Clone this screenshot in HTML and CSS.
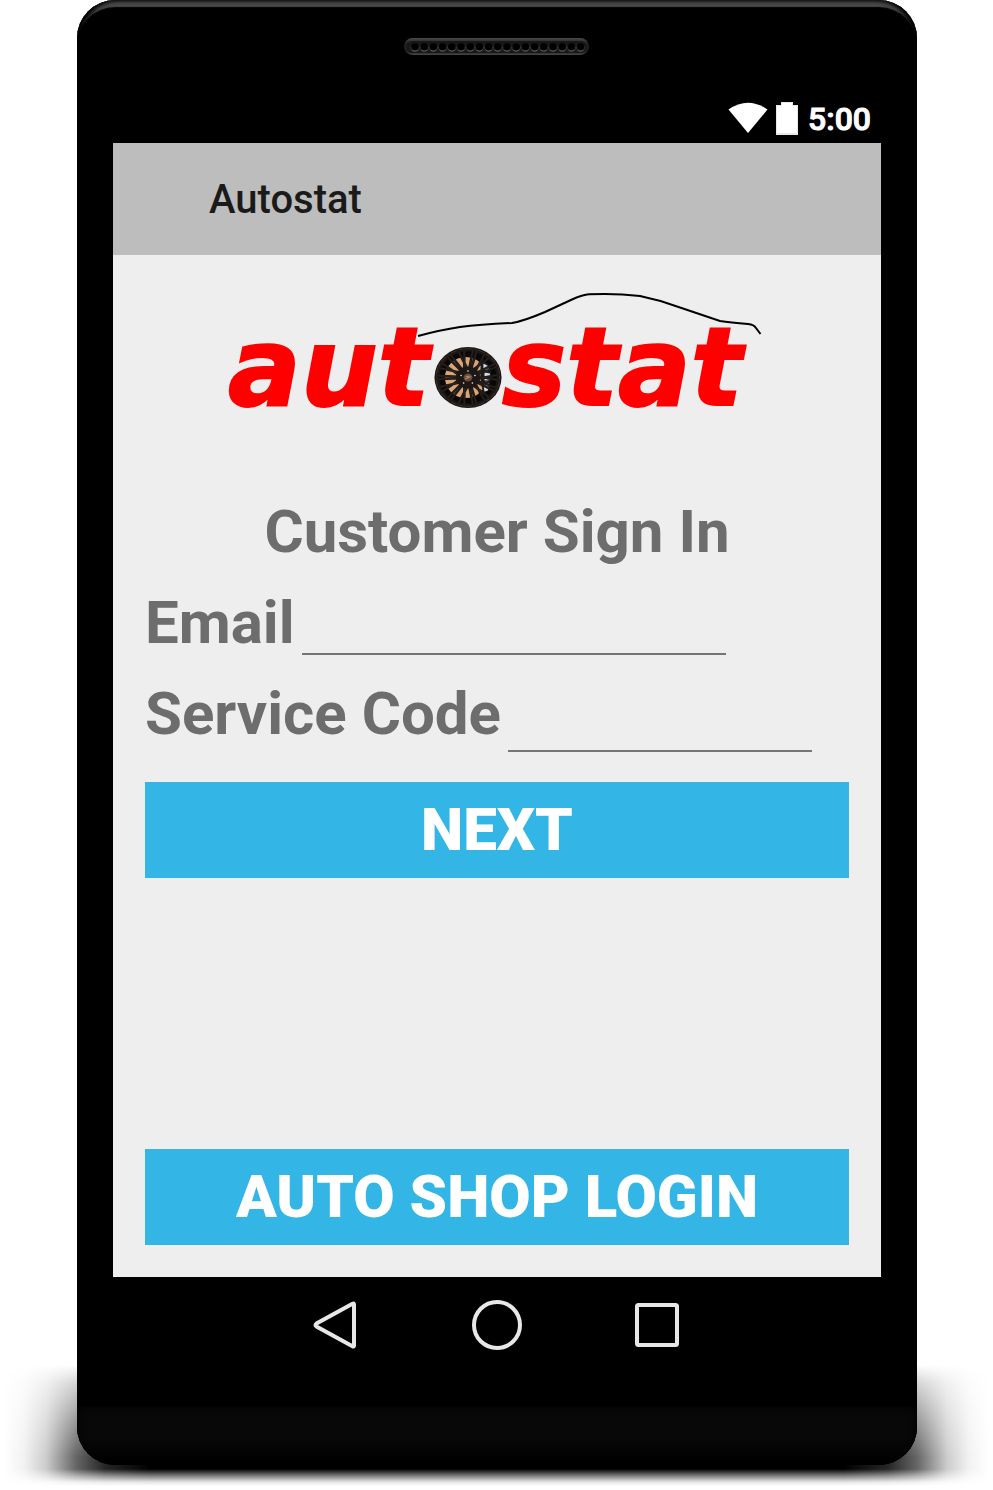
FILE: index.html
```html
<!DOCTYPE html>
<html lang="en">
<head>
<meta charset="utf-8">
<meta name="viewport" content="width=device-width, initial-scale=1">
<title>Autostat</title>
<link rel="stylesheet" href="styles.css">
</head>
<body>
<div class="stage">
  <div class="shadow"></div>
  <div class="phone">
    <div class="earpiece">
      <svg class="speaker" viewBox="0 0 185 17" aria-hidden="true">
        <defs>
          <linearGradient id="rim" x1="0" y1="0" x2="0" y2="1">
            <stop offset="0" stop-color="#4a4a4a"/>
            <stop offset=".3" stop-color="#222"/>
            <stop offset=".8" stop-color="#202020"/>
            <stop offset="1" stop-color="#484848"/>
          </linearGradient>
          <pattern id="holes" x="6.4" y="4" width="9.2" height="10" patternUnits="userSpaceOnUse">
            <circle cx="4.6" cy="5.6" r="4.1" fill="#5a5a5a"/>
            <circle cx="4.6" cy="4.8" r="3.8" fill="#000"/>
          </pattern>
        </defs>
        <rect width="185" height="17" rx="8.5" fill="url(#rim)"/>
        <rect x="2" y="3" width="181" height="12" rx="6" fill="#181818"/>
        <rect x="6.4" y="4" width="174.8" height="10" fill="url(#holes)"/>
      </svg>
    </div>
    <div class="statusbar">
      <svg class="wifi" viewBox="0 0 40 32" aria-label="Wi-Fi"><path d="M0.5 7.5Q20-6 39.500 7.500L20 31Z" fill="#fff"/></svg>
      <svg class="battery" viewBox="0 0 22 33" aria-label="Battery"><path d="M5 0h12v3h5v30H0V3h5Z" fill="#e8e8e8"/><path d="M6 1h10v3h5v27H1V4h5Z" fill="#fff"/></svg>
      <span class="clock">5:00</span>
    </div>
    <div class="screen">
      <header class="appbar"><h1 class="appname">Autostat</h1></header>
      <main class="content">
        <svg class="logo" viewBox="145 287 704 148" role="img" aria-label="autostat">
          <path d="M418 336Q440 330 460 327Q480 324.500 512 323Q524 321 545 312L572 299.500Q583 294.500 589 294.300Q615 293 640 296Q660 300 680 307.500L720 321Q730 322.500 748 324Q754 324.500 756 328L760.500 334" fill="none" stroke="#000" stroke-width="2"/>
          <text class="logo-text" x="228" y="405">aut</text>
          <text class="logo-text" x="502" y="405">stat</text>
          <g transform="translate(468 377.500) scale(1.1 1)">
            <circle r="30.500" fill="#1b1613"/>
            <circle r="28.800" fill="none" stroke="#39322f" stroke-width="1"/>
            <circle r="26" fill="#080706"/>
            <ellipse cx="-2" cy="0" rx="19" ry="20.500" fill="#d9a477"/>
            <path d="M12-18Q20-14 21-7L20 12L14 17Q10 0 12-18Z" fill="#191c26"/>
            <path d="M14-14l5 3-1 5-4-2ZM15-5l5 1v6l-5 1ZM14 7l5-1-1 7-3 1Z" fill="#d5d9e3"/>
            <path d="M17-1h3M16 4l3-2" stroke="#9e5b49" stroke-width="1"/>
            <defs>
              <path id="spoke" d="M8 1.500L29-3M8-1.500L29 3M8 3L27 11M8-3L27-11"/>
            </defs>
            <g fill="none" stroke="#1b1613" stroke-width="2.400">
              <use href="#spoke"/>
              <use href="#spoke" transform="rotate(51.400)"/>
              <use href="#spoke" transform="rotate(102.800)"/>
              <use href="#spoke" transform="rotate(154.300)"/>
              <use href="#spoke" transform="rotate(205.700)"/>
              <use href="#spoke" transform="rotate(257.100)"/>
              <use href="#spoke" transform="rotate(308.600)"/>
            </g>
            <g fill="none" stroke="#3d342e" stroke-width=".4">
              <use href="#spoke"/>
              <use href="#spoke" transform="rotate(51.400)"/>
              <use href="#spoke" transform="rotate(102.800)"/>
              <use href="#spoke" transform="rotate(154.300)"/>
              <use href="#spoke" transform="rotate(205.700)"/>
              <use href="#spoke" transform="rotate(257.100)"/>
              <use href="#spoke" transform="rotate(308.600)"/>
            </g>
            <circle r="11" fill="#1c1714"/>
            <g fill="#e9e4dd"><circle cx="0" cy="-6.500" r=".8"/><circle cx="6.300" cy="-2" r=".8"/><circle cx="4" cy="5.500" r=".8"/><circle cx="-4" cy="5.500" r=".8"/><circle cx="-6.300" cy="-2" r=".8"/></g>
            <circle r="4" fill="#6b4d39"/>
            <path d="M-2.500 1.500L2.500-1M-2-.5L1-1.500" stroke="#c9a589" stroke-width=".8"/>
          </g>
        </svg>
        <form class="signin">
          <h2 class="heading">Customer Sign In</h2>
          <div class="row">
            <label for="email">Email</label>
            <input class="field field-email" id="email" type="email">
          </div>
          <div class="row">
            <label for="code">Service Code</label>
            <input class="field field-code" id="code" type="text">
          </div>
          <button class="action next" type="button">NEXT</button>
        </form>
        <button class="action" type="button">AUTO SHOP LOGIN</button>
      </main>
    </div>
    <nav class="navbar">
      <button class="navkey" type="button" aria-label="Back"><svg viewBox="0 0 54 54"><path d="M46 6.500V47.500Q46 49 44.500 48.200L8.500 28.500Q6.500 27 8.500 25.500L44.500 5.800Q46 5 46 6.500Z"/></svg></button>
      <button class="navkey" type="button" aria-label="Home"><svg viewBox="0 0 54 54"><circle cx="27" cy="27" r="23"/></svg></button>
      <button class="navkey" type="button" aria-label="Recent apps"><svg viewBox="0 0 54 54"><rect x="5" y="7" width="40" height="40" rx="1.500"/></svg></button>
    </nav>
    <div class="chin"></div>
  </div>
</div>
</body>
</html>
```
FILE: styles.css
```css
* { box-sizing: border-box; }

body {
  margin: 0;
  background: #fff;
  font-family: Roboto, "Liberation Sans", sans-serif;
}

.stage {
  position: relative;
  display: flex;
  min-height: 100vh;
  padding: 0 76px 25px 77px;
}

.shadow {
  position: absolute;
  left: 0;
  right: 0;
  bottom: 4px;
  height: 121px;
  background: linear-gradient(90deg, transparent 4px, rgba(0, 0, 0, .05) 24px, rgba(0, 0, 0, .2) 46px, rgba(0, 0, 0, .6) 76px, rgba(0, 0, 0, .85) 105px, #000 150px, #000 calc(100% - 150px), rgba(0, 0, 0, .85) calc(100% - 105px), rgba(0, 0, 0, .6) calc(100% - 76px), rgba(0, 0, 0, .2) calc(100% - 46px), rgba(0, 0, 0, .05) calc(100% - 24px), transparent calc(100% - 4px));
  mask-image: linear-gradient(180deg, transparent 0, rgba(0, 0, 0, .28) 18px, rgba(0, 0, 0, .7) 60px, #000 92px, #000 104px, rgba(0, 0, 0, .5) 111px, rgba(0, 0, 0, .1) 117px, transparent 121px);
}

.phone {
  position: relative;
  flex: 1;
  min-width: 0;
  display: flex;
  flex-direction: column;
  border-radius: 38px;
  overflow: hidden;
  background: #000;
  box-shadow: inset 5px 0 4px #000, inset -5px 0 4px #000, inset 0 7px 1px #484848;
}

.earpiece {
  display: flex;
  justify-content: center;
  padding: 38px 2px 0 0;
}

.speaker { width: 185px; height: 17px; }

.statusbar {
  display: flex;
  align-items: flex-start;
  justify-content: flex-end;
  height: 88px;
  padding: 47px 46px 0 0;
  color: #fff;
}

.wifi { width: 40px; height: 32px; margin-right: 8px; }
.battery { width: 22px; height: 33px; margin-right: 10px; }

.clock {
  font-size: 32px;
  font-weight: 500;
  line-height: 34px;
  -webkit-text-stroke: 1px #fff;
}

.screen {
  flex: 1;
  display: flex;
  flex-direction: column;
  margin: 0 36px;
  background: #eee;
}

.appbar {
  display: flex;
  align-items: center;
  height: 112px;
  padding-left: 96px;
  background: #bdbdbd;
}

.appname {
  margin: 0;
  color: #1a1a1a;
  font-size: 40px;
  font-weight: 500;
}

.content {
  flex: 1;
  display: flex;
  flex-direction: column;
  justify-content: space-between;
  padding: 32px;
}

.logo { display: block; width: 100%; overflow: visible; }

.logo-text {
  fill: #f00;
  stroke: #f00;
  stroke-width: 2px;
  font: italic bold 108px "DejaVu Sans", sans-serif;
}

.signin {
  display: flex;
  flex-direction: column;
  gap: 21px;
  margin: 62px 0 auto;
  color: #6d6d6d;
  font-size: 60px;
  font-weight: 700;
  line-height: 70px;
}

.heading {
  margin: 0;
  font-size: 60px;
  text-align: center;
}

.row {
  display: flex;
  align-items: flex-start;
  gap: 7px;
  white-space: nowrap;
}

.field {
  min-width: 0;
  padding: 0 8px;
  border: 0;
  border-bottom: 2px solid #757575;
  border-radius: 0;
  outline: 0;
  background: transparent;
  color: #222;
  font: 36px Roboto, sans-serif;
}

.field-email { width: 424px; height: 67px; }
.field-code { width: 304px; height: 73px; }

.action {
  height: 96px;
  padding: 0 0 2px;
  border: 0;
  background: #33b5e5;
  color: #fff;
  font: 900 60px Roboto, sans-serif;
}

.next { margin-top: 9px; }

.navbar {
  display: flex;
  justify-content: center;
  align-items: center;
  gap: 108px;
  height: 96px;
}

.navkey {
  width: 54px;
  height: 54px;
  padding: 0;
  border: 0;
  background: transparent;
}

.navkey svg {
  display: block;
  fill: none;
  stroke: #e8e8e8;
  stroke-width: 4;
}

.chin {
  height: 58px;
  margin-top: 34px;
  background: linear-gradient(#080808 50%, #000);
  box-shadow: inset 0 0 8px #000;
}
```
